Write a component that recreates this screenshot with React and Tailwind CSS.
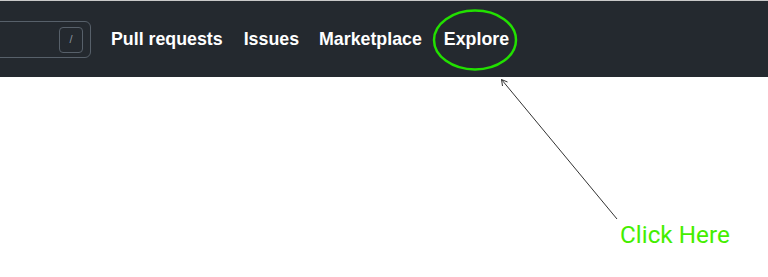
export default function App() {
  return (
    <div className="relative w-[768px] h-[277px] bg-white overflow-hidden">
      <div className="h-px bg-[#c8c8c8]" />
      <header className="h-[76px] bg-[#24292f] flex items-center font-['Liberation_Sans',Arial,sans-serif]">
        <div className="-ml-[12px] w-[103px] h-[37px] border border-[#57606a] rounded-md flex items-center justify-end pr-[7px] mt-[1px]">
          <div className="w-[24px] h-[26px] border border-[#57606a] rounded-[4px] flex items-center justify-center text-[#8b949e] text-[11px]">
            /
          </div>
        </div>
        <nav className="flex items-center ml-[20px] text-white font-bold text-[17.8px]">
          <span>Pull requests</span>
          <span className="ml-[21px]">Issues</span>
          <span className="ml-[20px]">Marketplace</span>
          <span className="ml-[22px]">Explore</span>
        </nav>
      </header>
      <svg className="absolute left-0 top-0 pointer-events-none" width="768" height="277">
        <ellipse cx="475" cy="40" rx="41" ry="29.5" fill="none" stroke="#22e000" strokeWidth="2.5" />
        <line x1="617" y1="219" x2="501.5" y2="79.5" stroke="#333" strokeWidth="1" />
        <path d="M501.5 79.5 L502.5 86 M501.5 79.5 L507.5 82" stroke="#333" strokeWidth="1" fill="none" />
      </svg>
      <div className="absolute left-[620px] top-[223px] text-[24.3px] leading-[24px] text-[#44ee00] font-['Roboto',sans-serif]">
        Click Here
      </div>
    </div>
  );
}
